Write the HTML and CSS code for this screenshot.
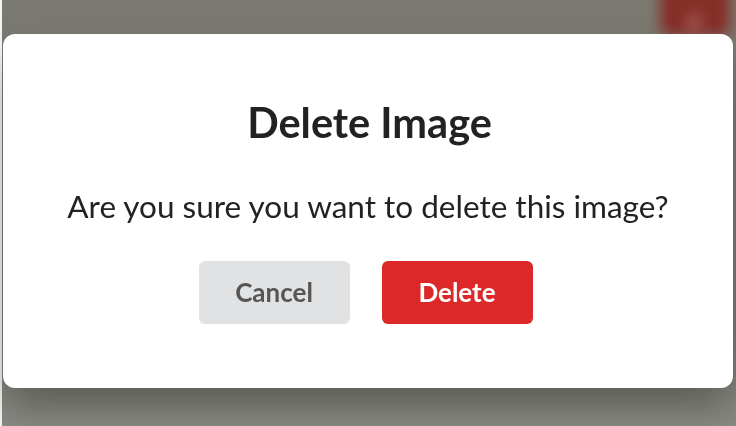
FILE: index.html
```html
<!DOCTYPE html>
<html lang="en">
<head>
<meta charset="utf-8">
<title>Delete Image</title>
<link rel="stylesheet" href="styles.css">
</head>
<body>
<div class="backdrop">
  <div class="behind-btn"><span class="behind-icon"></span></div>
</div>
<div class="stage">
  <div class="modal" role="dialog" aria-labelledby="t">
    <h2 class="modal-title" id="t">Delete Image</h2>
    <p class="modal-text">Are you sure you want to delete this image?</p>
    <div class="actions">
      <button class="btn btn-cancel">Cancel</button>
      <button class="btn btn-delete">Delete</button>
    </div>
  </div>
</div>
</body>
</html>
```
FILE: styles.css
```css
html, body {
  margin: 0;
  padding: 0;
  width: 736px;
  height: 426px;
  overflow: hidden;
  background: #f4f4f4;
  font-family: Lato, "Open Sans", sans-serif;
}

.backdrop {
  position: fixed;
  left: 2px;
  top: 0;
  right: 0;
  bottom: 0;
  background: linear-gradient(#7b7a72 0%, #7b7a72 80%, #8a8a85 100%);
  overflow: hidden;
}

.behind-btn {
  position: absolute;
  left: 658px;
  top: -22px;
  width: 70px;
  height: 58px;
  border-radius: 10px;
  background: #862e28;
  filter: blur(7px);
}

.behind-icon {
  position: absolute;
  left: 26px;
  top: 36px;
  width: 16px;
  height: 16px;
  border-radius: 50%;
  background: rgba(255, 200, 200, 0.3);
}

.stage {
  position: relative;
  padding: 34px 3px 0 3px;
}

.modal {
  background: #ffffff;
  border-radius: 12px;
  height: 354px;
  box-sizing: border-box;
  padding-top: 64px;
  display: flex;
  flex-direction: column;
  align-items: center;
  box-shadow: 0 22px 40px -6px rgba(40, 40, 30, 0.45);
}

.modal-title {
  margin: 0 0 0 3px;
  font-size: 41.5px;
  line-height: 1.2;
  font-weight: 700;
  color: #222222;
}

.modal-text {
  margin: 40px 0 0 0;
  font-size: 31.5px;
  line-height: 1.2;
  color: #222222;
}

.actions {
  display: flex;
  gap: 32px;
  margin-top: 35px;
  margin-right: 5px;
}

.btn {
  width: 151px;
  height: 63px;
  border: none;
  border-radius: 6px;
  font-family: Lato, "Open Sans", sans-serif;
  font-size: 26px;
  font-weight: 700;
  cursor: pointer;
}

.btn-cancel {
  background: #e1e2e4;
  color: #555555;
}

.btn-delete {
  background: #dc2828;
  color: #ffffff;
}
```
